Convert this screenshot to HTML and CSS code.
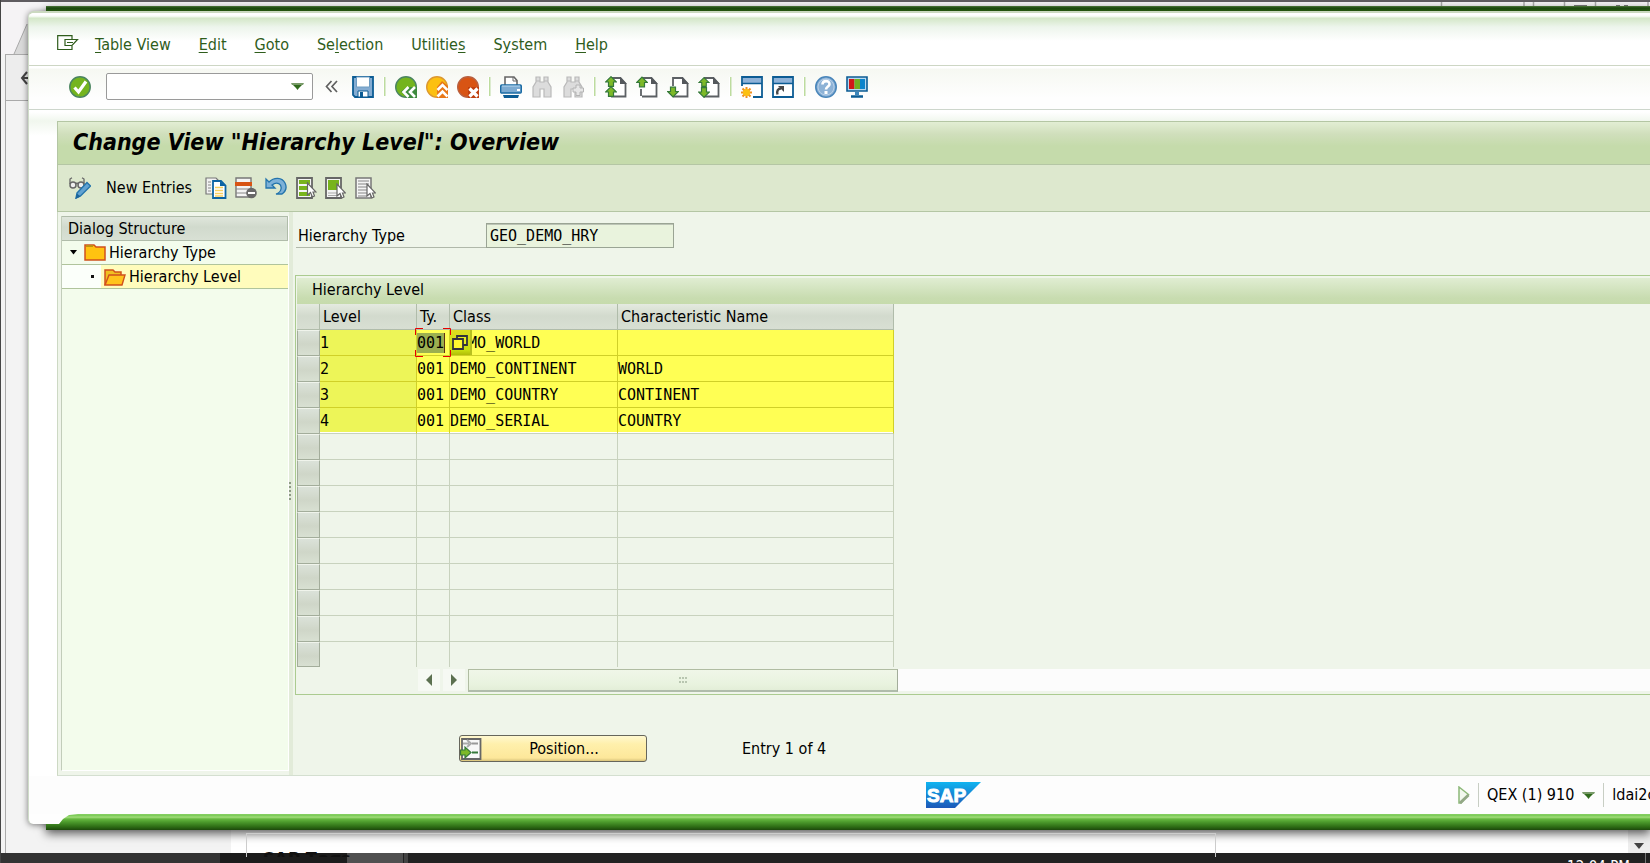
FILE: index.html
```html
<!DOCTYPE html>
<html lang="en">
<head>
<meta charset="utf-8">
<title>Change View "Hierarchy Level": Overview</title>
<link rel="stylesheet" href="styles.css">
</head>
<body>
<svg class="defs" aria-hidden="true">
  <defs>
    <symbol id="doc" viewBox="0 0 22 22"><path d="M6 2H15.500L20.500 7.500V20.500H6" fill="#fff" stroke="#5c6064" stroke-width="1.800"/><path d="M15 1L22 8H15Z" fill="#54585c"/></symbol>
    <symbol id="up" viewBox="0 0 12 11"><path d="M6 .7L11.300 6H8.500V10.300H3.500V6H.7Z" fill="#7db928" stroke="#35793a" stroke-width="1.200"/></symbol>
    <symbol id="down" viewBox="0 0 12 11"><path d="M6 10.300L11.300 5H8.500V.7H3.500V5H.7Z" fill="#7db928" stroke="#35793a" stroke-width="1.200"/></symbol>
    <symbol id="binoc" viewBox="0 0 22 22"><path d="M5 1H9V6H13V1H17V6L20 11V21H13V13H9V21H2V11L5 6Z" fill="#dcdcdc" stroke="#b9b9b9" stroke-width="1.200"/><path d="M5 5H9M13 5H17" stroke="#b9b9b9"/></symbol>
    <symbol id="pointer" viewBox="0 0 10 16"><path d="M1 1V13L4 10.500L6 15L8 14L6.500 10H9.500Z" fill="#fff" stroke="#666" stroke-width="1.200"/></symbol>
  </defs>
</svg>

<div class="backdrop">
  <div class="browser-tabs"><svg class="tab-edge" viewBox="0 0 20 30" aria-hidden="true"><path d="M1 30L14 0H20V30Z" fill="#d9d9d9"/><path d="M1 30L14 0" stroke="#a8a8a8" fill="none"/></svg>
    <svg class="caption-buttons" width="210" height="5" viewBox="0 0 210 5" aria-hidden="true"><path d="M1.500 0V5M84 0V5M93.500 0V5M124.500 0V5M155.500 0V5M208 0V5" stroke="#aaa" stroke-width="1.500"/><path d="M134 4H147M176 4H180M184 4H188" stroke="#777" stroke-width="2"/></svg>
  </div>
  <div class="browser-bar"><svg width="8" height="16" viewBox="0 0 8 16" aria-hidden="true"><path d="M7 2L2 8L7 14M2 8H8" fill="none" stroke="#444" stroke-width="2"/></svg></div>
  <div class="browser-page"><div class="page-sheet"><div class="page-box"><span class="page-title">SAP Tags</span></div></div><div class="page-scroll"><svg width="10" height="6" viewBox="0 0 10 6" aria-hidden="true"><path d="M0 0H10L5 6Z" fill="#444"/></svg></div></div>
  <div class="taskbar"><span class="task-gap"></span><span class="task-dark"></span><span class="task-active"></span><span class="task-line"></span><span class="clock">12:04 PM</span></div>
</div>

<div class="frame"></div>
<main class="window">
  <nav class="menu">
    <button class="menu-icon" aria-label="Menu"><svg width="22" height="16" viewBox="0 0 22 16"><path d="M15 4V.7H.7V14.500H15V11" fill="none" stroke="#2f5d1c" stroke-width="1.200"/><path d="M8 4.500H20.500L15 10.500H8Z" fill="#fff" stroke="#2f5d1c" stroke-width="1.200"/><path d="M10 7.500H16" stroke="#2f5d1c"/></svg></button>
    <button><u>T</u>able View</button><button><u>E</u>dit</button><button><u>G</u>oto</button><button>Se<u>l</u>ection</button><button>Utilitie<u>s</u></button><button>S<u>y</u>stem</button><button><u>H</u>elp</button>
  </nav>

  <div class="toolbar">
    <button aria-label="Enter"><svg class="ico" viewBox="0 0 22 22"><circle cx="11" cy="11" r="10.200" fill="#74b41e" stroke="#4b8560" stroke-width="1.500"/><path d="M5.500 11.500L9.500 16L17 5.500" fill="none" stroke="#fff" stroke-width="3.200"/></svg></button>
    <div class="command"><input type="text" aria-label="Command"><svg width="13" height="7" viewBox="0 0 13 7" aria-hidden="true"><path d="M1 1H12L8 5L6.500 7L5 5Z" fill="#2f6a1c"/><path d="M0 0H13L12 2H1Z" fill="#789a68"/></svg></div>
    <button class="collapse" aria-label="Collapse"><svg width="13" height="13" viewBox="0 0 13 13"><path d="M6.500 1L1.500 6.500L6.500 12M12 1L7 6.500L12 12" fill="none" stroke="#606060" stroke-width="1.700"/></svg></button>
    <button aria-label="Save"><svg class="ico" viewBox="0 0 22 22"><path d="M1 1H21V21H3L1 19Z" fill="#84acd2" stroke="#0c5c94" stroke-width="1.800"/><path d="M4.500 1H17.500V11H4.500Z" fill="#fff" stroke="#6d9cc2"/><path d="M6 15H16V21H6Z" fill="#fff" stroke="#0c5c94"/><path d="M8 16H11V21H8Z" fill="#0c5c94"/></svg></button>
    <span class="sep"></span>
    <button aria-label="Back"><svg class="ico" viewBox="0 0 22 22"><circle cx="11" cy="11" r="10.300" fill="#74b41e" stroke="#4b8560" stroke-width="1.400"/><path d="M22 11H12L6 15.500L12 22H22Z" fill="#3e8a3e"/><path d="M13.500 11L8.500 16L13.500 21M20 11L15 16L20 21" fill="none" stroke="#fff" stroke-width="2.600"/></svg></button>
    <button aria-label="Exit"><svg class="ico" viewBox="0 0 22 22"><circle cx="11" cy="11" r="10.300" fill="#fcc010" stroke="#dc9830" stroke-width="1.400"/><path d="M11 22V11L16 5L22 10V22Z" fill="#e87818"/><path d="M11.500 14L16.500 9L21.500 14M11.500 20.500L16.500 15.500L21.500 20.500" fill="none" stroke="#fff" stroke-width="2.600"/></svg></button>
    <button aria-label="Cancel"><svg class="ico" viewBox="0 0 22 22"><circle cx="11" cy="11" r="10.300" fill="#d85414" stroke="#b86040" stroke-width="1.400"/><path d="M11 11H22V22H11Z" fill="#c04010"/><path d="M12.500 12.500L20.500 20.500M20.500 12.500L12.500 20.500" fill="none" stroke="#fff" stroke-width="3.200"/></svg></button>
    <span class="sep"></span>
    <button aria-label="Print"><svg class="ico" viewBox="0 0 22 22"><path d="M5 10V1H14L17 4.500V10" fill="#fff" stroke="#666" stroke-width="1.600"/><path d="M13 1V5H17" fill="none" stroke="#666"/><rect x=".7" y="9" width="20.600" height="8" rx="1" fill="#7dabd2" stroke="#1a6ba4" stroke-width="1.400"/><path d="M2 10H20" stroke="#badaf0"/><path d="M17 14H20" stroke="#fff" stroke-width="2"/><path d="M3 19H19L18 22H4Z" fill="#0c5c94"/></svg></button>
    <button aria-label="Find"><svg class="ico"><use href="#binoc"/></svg></button>
    <button aria-label="Find next"><svg class="ico" viewBox="0 0 22 22"><use href="#binoc" width="22" height="22"/><path d="M14 9H18V12H21.500V16H18V19.500H14V16H11V12H14Z" fill="#e6e6e6" stroke="#b4b4b4"/></svg></button>
    <span class="sep"></span>
    <button aria-label="First page"><svg class="ico" viewBox="0 0 22 22"><use href="#doc" width="22" height="22"/><path d="M5 3H10V19H5Z" fill="#fff"/><use href="#up" width="12" height="11"/><use href="#up" y="10" width="12" height="11"/></svg></button>
    <button aria-label="Previous page"><svg class="ico" viewBox="0 0 22 22"><use href="#doc" width="22" height="22"/><path d="M5 13V20" stroke="#5c6064" stroke-width="1.800"/><use href="#up" width="12" height="12"/></svg></button>
    <button aria-label="Next page"><svg class="ico" viewBox="0 0 22 22"><use href="#doc" width="22" height="22"/><path d="M6 1V10" stroke="#5c6064" stroke-width="1.800"/><use href="#down" y="10" width="12" height="12"/></svg></button>
    <button aria-label="Last page"><svg class="ico" viewBox="0 0 22 22"><use href="#doc" width="22" height="22"/><path d="M5 3H10V19H5Z" fill="#fff"/><use href="#up" y="1" width="12" height="10"/><use href="#down" y="11" width="12" height="11"/></svg></button>
    <span class="sep"></span>
    <button aria-label="New session"><svg class="ico" viewBox="0 0 22 22"><path d="M1 10V1H21V21H12" fill="#fff" stroke="#0c5c94" stroke-width="1.800"/><path d="M2 2H20V7H2Z" fill="#8eb2d8"/><path d="M1 7.500H21" stroke="#0c5c94" stroke-width="1.600"/><path d="M5.500 11V22M0 16.500H11M1.500 12.500L9.500 20.500M9.500 12.500L1.500 20.500" stroke="#f09020" stroke-width="2"/><circle cx="5.500" cy="16.500" r="3.500" fill="#fcc010"/></svg></button>
    <button aria-label="Create shortcut"><svg class="ico" viewBox="0 0 22 22"><path d="M1 1H21V21H1Z" fill="#fff" stroke="#0c5c94" stroke-width="1.800"/><path d="M2 2H20V7H2Z" fill="#8eb2d8"/><path d="M1 7.500H21" stroke="#0c5c94" stroke-width="1.600"/><path d="M5.500 18.500C4.500 15 6 12.500 9 12.500" fill="none" stroke="#484848" stroke-width="2.400"/><path d="M6 10H12V16Z" fill="#484848"/></svg></button>
    <span class="sep"></span>
    <button aria-label="Help"><svg class="ico" viewBox="0 0 22 22"><circle cx="11" cy="11" r="10.200" fill="#8db2d6" stroke="#4a86ba" stroke-width="1.600"/><circle cx="11" cy="11" r="8" fill="none" stroke="#b8d0e8"/><path d="M7.500 8.500C7.500 4 14.500 4 14.500 8.200C14.500 10.500 11 10.500 11 13.500" fill="none" stroke="#fff" stroke-width="2.600"/><path d="M9.500 15H12.500V18H9.500Z" fill="#fff"/></svg></button>
    <button aria-label="Customize layout"><svg class="ico" viewBox="0 0 22 22"><path d="M1 1H21V15H1Z" fill="#b8d8f0" stroke="#0c5c94" stroke-width="1.600"/><path d="M3 3H8.500V13H3Z" fill="#d01818"/><path d="M8.500 3H14V13H8.500Z" fill="#70b020"/><path d="M14 3H19V13H14Z" fill="#0c84cc"/><path d="M11 16V19" stroke="#3c86bc" stroke-width="4"/><path d="M5 20.500H17" stroke="#0c5c94" stroke-width="2.400"/></svg></button>
  </div>

  <section class="screen">
    <h1 class="title">Change View "Hierarchy Level": Overview</h1>
    <div class="app-toolbar">
      <button class="first" aria-label="Display/Change"><svg class="ico" viewBox="0 0 22 22"><circle cx="4" cy="8" r="3" fill="#eee" stroke="#666" stroke-width="1.500"/><circle cx="12" cy="8" r="3" fill="#eee" stroke="#666" stroke-width="1.500"/><path d="M1 7V2L3 .8M15 7V2L13 .8M6.500 7L8 6L9.500 7" fill="none" stroke="#666" stroke-width="1.300"/><path d="M8 16L18 5.500L21.500 9L11.500 19L7 21Z" fill="#62a2d2" stroke="#2474ac" stroke-width="1.400"/><path d="M6.500 22L8 16.500L11.500 19.500Z" fill="#1c659a"/></svg></button>
      <button class="text-button">New Entries</button>
      <button aria-label="Copy as"><svg class="ico" viewBox="0 0 22 22"><path d="M1 1H11L13 3V17H1Z" fill="#f2f2f2" stroke="#777" stroke-width="1.200"/><path d="M3 5H6M3 8H6M3 11H6M3 14H6" stroke="#888"/><path d="M8 4H16L20.500 8.500V21H8Z" fill="#fff" stroke="#0c64a4" stroke-width="1.800"/><path d="M15 4V9H21Z" fill="#0c64a4"/><path d="M10 10.500H18M10 13.500H18M10 16.500H18M10 19H18" stroke="#f8d060" stroke-width="1.700"/></svg></button>
      <button aria-label="Delete"><svg class="ico" viewBox="0 0 22 22"><path d="M1 1H16V20H1Z" fill="#f4f4f4" stroke="#777" stroke-width="1.400"/><path d="M0 5H17V9H0Z" fill="#d85414"/><path d="M1 12H16M1 16H12" stroke="#888"/><circle cx="16.500" cy="16" r="5.300" fill="#686868"/><path d="M13 16H20" stroke="#fff" stroke-width="2"/></svg></button>
      <button aria-label="Undo"><svg class="ico" viewBox="0 0 22 22"><path d="M1 2V11H10L7 8C12 4 17 7 16 12C15.500 15 14 16 11 17H17C21 14 22 10 20 6C17 0 9 0 4 5Z" fill="#7db1d8" stroke="#2474ac" stroke-width="1.300"/></svg></button>
      <button aria-label="Select all"><svg class="ico" viewBox="0 0 22 22"><path d="M2 1H17V21H2Z" fill="#f4f4f4" stroke="#666" stroke-width="1.800"/><path d="M4 3H15V7H4ZM4 9H15V13H4ZM4 15H15V19H4Z" fill="#78b41c"/><use href="#pointer" x="11" y="5" width="11" height="16"/></svg></button>
      <button aria-label="Select block"><svg class="ico" viewBox="0 0 22 22"><path d="M1 1H16V21H1Z" fill="#f4f4f4" stroke="#666" stroke-width="1.800"/><path d="M3 3H14V13H3Z" fill="#78b41c"/><path d="M3 16H12M3 18.500H12" stroke="#aaa" stroke-width="1.200"/><use href="#pointer" x="11" y="6" width="10" height="16"/></svg></button>
      <button aria-label="Deselect all"><svg class="ico" viewBox="0 0 22 22"><path d="M1 1H16V21H1Z" fill="#f4f4f4" stroke="#777" stroke-width="1.500"/><path d="M3 4H14M3 7H14M3 10H14M3 13H12M3 16H12M3 19H12" stroke="#aaa" stroke-width="1.400"/><use href="#pointer" x="11" y="6" width="10" height="16"/></svg></button>
    </div>
    <div class="work">
      <aside class="tree">
        <h2 class="tree-head">Dialog Structure</h2>
        <ul>
          <li><span class="branch"><svg width="7" height="5" viewBox="0 0 7 5" aria-hidden="true"><path d="M0 0H7L3.500 4.500Z" fill="#000"/></svg></span><svg class="folder" viewBox="0 0 22 18" aria-hidden="true"><path d="M1 3V1H10L12 3H21V16H1Z" fill="#ffc310" stroke="#d0501c" stroke-width="1.500"/><path d="M2 2H9" stroke="#c09010" stroke-width="2"/></svg><a href="#type">Hierarchy Type</a></li>
          <li class="selected"><span class="branch deep"><i class="dot"></i></span><svg class="folder" viewBox="0 0 22 18" aria-hidden="true"><path d="M1 17V2H9L11 4H17V8" fill="#f0c020" stroke="#d0501c" stroke-width="1.500"/><path d="M1 17L5 7H21L18 17Z" fill="#ffc31c" stroke="#d0501c" stroke-width="1.400"/></svg><a href="#level">Hierarchy Level</a></li>
        </ul>
      </aside>
      <div class="splitter"><i></i><i></i><i></i><i></i><i></i></div>
      <div class="detail">
        <div class="field"><label for="htype">Hierarchy Type</label><input id="htype" type="text" value="GEO_DEMO_HRY" readonly></div>
        <section class="group">
          <h2>Hierarchy Level</h2>
          <table>
            <thead><tr><th class="c-sel" aria-label="Select"></th><th class="c-level">Level</th><th class="c-type">Ty.</th><th class="c-class">Class</th><th class="c-name">Characteristic Name</th></tr></thead>
            <tbody>
              <tr class="hot"><td></td><td>1</td><td class="focus"><input type="text" value="001" aria-label="Type"><svg class="corners" width="36" height="29" viewBox="0 0 36 29" aria-hidden="true"><path d="M.5 7V.5H8M28 .5H35.500V7M.5 22V28.500H8M28 28.500H35.500V22" fill="none" stroke="#e80000"/></svg><button class="f4" aria-label="Input help"><svg width="16" height="16" viewBox="0 0 16 16"><path d="M5 1H15V10H5Z" fill="#e8ee20" stroke="#33333c" stroke-width="1.800"/><path d="M1 4H11V14H1Z" fill="#fff830" stroke="#33333c" stroke-width="1.800"/></svg></button></td><td>DEMO_WORLD</td><td></td></tr>
              <tr class="hot"><td></td><td>2</td><td>001</td><td>DEMO_CONTINENT</td><td>WORLD</td></tr>
              <tr class="hot"><td></td><td>3</td><td>001</td><td>DEMO_COUNTRY</td><td>CONTINENT</td></tr>
              <tr class="hot last"><td></td><td>4</td><td>001</td><td>DEMO_SERIAL</td><td>COUNTRY</td></tr>
              <tr><td></td><td></td><td></td><td></td><td></td></tr>
              <tr><td></td><td></td><td></td><td></td><td></td></tr>
              <tr><td></td><td></td><td></td><td></td><td></td></tr>
              <tr><td></td><td></td><td></td><td></td><td></td></tr>
              <tr><td></td><td></td><td></td><td></td><td></td></tr>
              <tr><td></td><td></td><td></td><td></td><td></td></tr>
              <tr><td></td><td></td><td></td><td></td><td></td></tr>
              <tr><td></td><td></td><td></td><td></td><td></td></tr>
              <tr><td></td><td></td><td></td><td></td><td></td></tr>
            </tbody>
          </table>
          <div class="scroll">
            <button aria-label="Scroll left"><svg width="8" height="12" viewBox="0 0 8 12"><path d="M7 0V12L1 6Z" fill="#5c7050"/></svg></button>
            <button aria-label="Scroll right"><svg width="8" height="12" viewBox="0 0 8 12"><path d="M1 0V12L7 6Z" fill="#5c7050"/></svg></button>
            <div class="track"><div class="thumb"><i></i><i></i><i></i><i></i><i></i><i></i></div></div>
          </div>
        </section>
        <div class="actions">
          <button class="position"><svg class="ico" viewBox="0 0 22 22" aria-hidden="true"><path d="M2 1H20.500V21H2Z" fill="#f8f8f8" stroke="#666" stroke-width="1.800"/><path d="M3 5.500H9M7 2L11 5.500L7 9" fill="none" stroke="#aaa" stroke-width="2"/><path d="M12 5.500H18" stroke="#999" stroke-width="2"/><path d="M12 14.500H18" stroke="#35793a" stroke-width="2"/><path d="M.5 12H5V9L11 14.500L5 20V17H.5Z" fill="#7db928" stroke="#35793a" stroke-width="1.200"/></svg><span>Position...</span></button>
          <p>Entry 1 of 4</p>
        </div>
      </div>
    </div>
  </section>

  <footer class="status">
    <svg class="sap" viewBox="0 0 55 26" role="img" aria-label="SAP"><defs><linearGradient id="sg" x2="0" y2="1"><stop stop-color="#10b4f0"/><stop offset="1" stop-color="#1c58b8"/></linearGradient></defs><path d="M0 0H55L29 26H0Z" fill="url(#sg)"/><text class="sap-text" x="1" y="20">SAP</text></svg>
    <div class="system">
      <svg width="12" height="18" viewBox="0 0 12 18" aria-hidden="true"><path d="M1 1L10.500 8.500L3 17H1Z" fill="#f2f8ee" stroke="#8cb878" stroke-width="1.500"/><path d="M10.500 9L2 17" stroke="#93a886" stroke-width="3"/></svg>
      <i class="rule"></i>
      <button>QEX (1) 910 <svg width="13" height="7" viewBox="0 0 13 7" aria-hidden="true"><path d="M1 1H12L8 5L6.500 7L5 5Z" fill="#2f6a1c"/><path d="M0 0H13L12 2H1Z" fill="#789a68"/></svg></button>
      <i class="rule"></i>
      <span class="host">ldai2c</span>
    </div>
  </footer>
</main>
<div class="edge"></div>
</body>
</html>
```

FILE: styles.css
```css
* { box-sizing: border-box; }
html, body { height: 100%; }
body {
  margin: 0;
  overflow: hidden;
  position: relative;
  color: #000;
  font: 16px/20px "DejaVu Sans Condensed", "Noto Sans", sans-serif;
}
h1, h2, p, ul { margin: 0; padding: 0; font-weight: normal; }
ul { list-style: none; }
svg { display: block; flex: none; }
button { font: inherit; color: inherit; background: none; border: 0; padding: 0; }
input { font: inherit; color: inherit; min-width: 0; }
a { color: inherit; text-decoration: none; }
.defs { position: absolute; width: 0; height: 0; }
.ico { width: 22px; height: 22px; }

/* Browser behind the window */
.backdrop {
  position: absolute; inset: 0;
  display: flex; flex-direction: column;
  background: #f3f3f3;
  border-left: 1px solid #454545;
}
.browser-tabs {
  flex: none; display: flex; align-items: flex-end; justify-content: space-between;
  height: 54px; padding-left: 12px;
  border-top: 2px solid #5f5c60;
  background: #f5f3f5;
}
.tab-edge { width: 20px; height: 30px; }
.caption-buttons { align-self: flex-start; }
.browser-bar {
  flex: none; display: flex; align-items: center;
  height: 47px; margin-left: 4px; padding-left: 14px;
  border: 1px solid #aaa; background: #ededed;
}
.browser-page { flex: 1; display: flex; padding-left: 225px; margin-left: 4px; border-left: 1px solid #aaa; }
.page-sheet { flex: 1; display: flex; align-items: flex-end; padding-left: 15px; background: #fff; }
.page-box {
  position: relative; z-index: 1;
  width: 970px; height: 24px; margin-bottom: -4px; padding: 13px 0 0 16px;
  border: 1px solid #ccc; border-bottom: 0; overflow: hidden;
}
.page-title { display: block; font: bold 20px/24px "Open Sans", sans-serif; color: #111; }
.page-scroll { width: 22px; display: flex; align-items: flex-end; justify-content: center; padding-bottom: 4px; background: #eee; }
.taskbar { flex: none; display: flex; height: 10px; overflow: hidden; background: #222; }
.task-gap { width: 219px; background: #333; }
.task-dark { width: 127px; background: #1c1c1c; }
.task-active { width: 56px; background: #505050; }
.task-line { width: 5px; background: #444; border-left: 1px solid #222; }
.clock { margin-left: auto; padding: 4px 15px 0 0; border-right: 1px solid #777; color: #fff; font: 15px/20px "DejaVu Sans Condensed", sans-serif; height: 30px; margin-right: 4px; }

/* Window frame */
.frame {
  position: absolute; inset: 6px 0 33px 46px;
  background: linear-gradient(#4f7a3a, #1d4a10 2px, #2e6a14 5px, #2e6a14);
  box-shadow: 0 4px 9px rgba(0, 0, 0, .6);
}
.edge {
  position: absolute; right: 0; bottom: 33px; left: 46px; height: 16px;
  background: linear-gradient(#86cf62, #7ccb58 2px, #a8e080 3px, #66b840 5px, #4c9a2c 8px, #2c6a14 13px, #1d480c);
  clip-path: polygon(0 10px, 13px 10px, 17px 5px, 23px 1px, 32px 0, 100% 0, 100% 100%, 0 100%);
}
.window {
  position: absolute; inset: 11px 0 39px 28px;
  display: flex; flex-direction: column;
  padding-bottom: 10px;
  border-top: 2px solid #cbd9c0; border-left: 1px solid #cfdcc8;
  border-radius: 6px 0 0 5px;
  background: #fefefe;
  box-shadow: 0 1px 6px rgba(0, 0, 0, .5);
  overflow: hidden;
}

/* Menu and system toolbar */
.menu {
  flex: none; display: flex; align-items: center; gap: 28px;
  height: 53px; padding: 12px 0 0 28px;
  border-bottom: 1px solid #cdd6c4;
  background: linear-gradient(#fff 2px, #eef6ea 4px, #d3e7c7 5px, #edf5ec 14px, #fff 28px);
  color: #2f5d1c;
}
.menu u { text-underline-offset: 2px; }
.menu-icon { margin-right: -12px; padding-bottom: 5px; }
.toolbar {
  flex: none; display: flex; align-items: center; gap: 9px;
  height: 44px; padding: 0 0 2px 40px;
  border-bottom: 1px solid #cdd6cc;
  background: linear-gradient(#fff 2px, #f6f8f2 3px, #fefefe 32px);
}
.command {
  display: flex; align-items: center;
  width: 207px; height: 27px; margin-left: 6px; padding-right: 8px;
  border: 1px solid #9a9a9a; border-radius: 2px; background: #fff;
}
.command input { flex: 1; border: 0; background: none; outline: 0; }
.collapse { width: 21px; padding-left: 3px; }
.sep { width: 3px; height: 19px; background: linear-gradient(90deg, #fff 1px, #bddc9e 1px, #bddc9e 2px, #dcebcf 2px); }

/* Screen */
.screen {
  flex: 1; min-height: 0; display: flex; flex-direction: column;
  padding-left: 28px;
  background: linear-gradient(#fff 2px, #f1f7ee 11px, #fff 26px);
  padding-top: 11px;
}
.title {
  flex: none; height: 44px; padding-left: 15px;
  border: 1px solid #b4c6a4; border-right: 0;
  background: linear-gradient(#e2eed4, #d0dfbc 12px, #c5dbab 24px, #c5dbab);
  font: italic bold 23px/40px "DejaVu Sans Condensed", "Noto Sans", sans-serif;
}
.app-toolbar {
  flex: none; display: flex; align-items: center; gap: 8px;
  height: 47px; padding-left: 11px;
  border-left: 1px solid #b4c6a4; border-bottom: 1px solid #b4c6a4;
  background: #dde8ce;
}
.app-toolbar .ico { margin-bottom: 1px; }
.text-button { margin: 0 5px 0 7px; }
.work {
  flex: 1; min-height: 0; display: flex;
  border-left: 1px solid #cdd9c4; border-bottom: 1px solid #d4dfd0;
  background: #eff5ea;
}
.tree {
  flex: none; width: 228px; margin: 4px 0 4px 3px;
  border-left: 1px solid #c2cdba; border-bottom: 1px solid #fff; border-right: 1px solid #fff;
  background: #f3fcec;
}
.tree-head {
  height: 25px; padding-left: 6px;
  border: 1px solid #b0bcaa; border-left: 0;
  background: linear-gradient(#dfe6dc, #d1dacd 10px, #d8e0d4);
  font-size: 16px; line-height: 24px;
}
.tree li { display: flex; align-items: center; gap: 3px; height: 24px; border-bottom: 1px solid #b0c49c; }
.tree .selected { background: #fffcbc; }
.branch { display: flex; align-items: center; justify-content: center; width: 19px; height: 100%; padding-left: 3px; }
.deep { width: 39px; padding-left: 22px; background: #fbfffa; }
.dot { width: 3px; height: 3px; background: #111; }
.folder { width: 22px; height: 18px; }
.splitter {
  flex: none; width: 4px; background: #e2ebd9;
  display: flex; flex-direction: column; align-items: flex-start; justify-content: center; gap: 2px;
  padding-bottom: 6px;
}
.splitter i { width: 2px; height: 2px; background: #8d9a84; }
.detail { flex: 1; min-width: 0; padding: 11px 0 0 2px; }
.field { display: flex; align-items: stretch; height: 25px; padding-left: 1px; }
.field label { width: 190px; padding: 3px 0 0 2px; border-bottom: 1px solid #b0b8aa; }
.field input {
  width: 188px; padding: 0 3px; outline: 0;
  border: 1px solid #9aa494; box-shadow: inset 0 1px #bcc4b6;
  background: #e9f3dd;
  font: 15px "DejaVu Sans Mono", monospace;
}
.group { margin-top: 27px; padding: 2px 0 2px 1px; border: 1px solid #abcb90; border-right: 0; }
.group h2 {
  height: 26px; padding-left: 15px;
  background: linear-gradient(#e0edd2, #c8dcb0 20px, #c6dbac);
  font-size: 16px; line-height: 24px;
}
table { width: 597px; table-layout: fixed; border-collapse: separate; border-spacing: 0; }
.c-sel { width: 23px; } .c-level { width: 97px; } .c-type { width: 33px; } .c-class { width: 168px; }
th {
  height: 26px; padding: 0 3px; text-align: left; font-weight: normal; white-space: nowrap;
  border-right: 1px solid #b0bcaa; border-bottom: 1px solid #b0bcaa;
  background: linear-gradient(#e4eae0, #d2dacd 12px, #d8dfd3);
}
td {
  height: 26px; padding: 0; white-space: nowrap;
  border-right: 1px solid #c8d2be; border-bottom: 1px solid #c8d2be;
  font: 15px/20px "DejaVu Sans Mono", monospace;
}
td:first-child {
  border: 1px solid #a3ad9b; border-top-color: #f0f4ec;
  background: linear-gradient(#dbe2d9, #cfd6c8 13px, #d8e0d2);
}
.hot td:not(:first-child) { background: #ffff54; border-color: #d0d028; }
.hot td:nth-child(2) { background: #edf558; }
.last td:not(:first-child) { border-bottom-color: #c8d2be; box-shadow: inset 0 -1px #fff; }
tbody tr:last-child td { height: 25px; }
tbody tr:last-child td:not(:first-child) { border-bottom: 0; }
.focus { position: relative; }
.focus input {
  display: block; width: 28px; height: 20px; padding: 0; border: 0; outline: 0;
  border-right: 1px solid #603010; background: #9caf50;
}
.corners { position: absolute; top: -2px; left: -2px; z-index: 1; }
.f4 {
  position: absolute; top: 0; left: 33px; width: 22px; height: 25px; padding: 4px 0 0 2px;
  background: linear-gradient(#dddd20, #c8e010 20px, #b0bc08); border-right: 2px solid #b8c020;
}
.f4 svg { margin-bottom: 4px; }
.scroll { display: flex; height: 25px; padding: 2px 0 1px 121px; gap: 3px; }
.scroll button { width: 22px; height: 22px; display: flex; align-items: center; justify-content: center; background: #f6f9f3; }
.track { flex: 1; background: #fcfcfc; }
.thumb {
  width: 430px; height: 23px;
  display: grid; grid-template-columns: repeat(3, 2px); gap: 2px 1px; place-content: center;
  border: 1px solid #b0bca2; border-bottom: 2px solid #b0bcab; border-right-color: #a3ad9b;
  background: linear-gradient(#f0f6e8, #e9f3df 14px, #e3eed8);
}
.thumb i { width: 2px; height: 2px; background: #b8c6b0; }
.actions { display: flex; align-items: center; gap: 95px; padding: 40px 0 0 164px; }
.position {
  display: flex; align-items: center; width: 188px; height: 27px;
  border: 1px solid #66665c; border-radius: 3px;
  background: linear-gradient(#fff8d0, #fff0ac 8px, #fde79a 22px, #d9c47c);
}
.position span { flex: 1; text-align: center; }

/* Status bar */
.status { flex: none; display: flex; align-items: center; justify-content: space-between; height: 38px; padding-left: 897px; background: #fdfdfd; }
.sap { width: 55px; height: 26px; }
.sap-text { font: bold 19px "Liberation Sans", Arial, sans-serif; fill: #fff; stroke: #fff; }
.system { display: flex; align-items: center; width: 192px; gap: 8px; overflow: hidden; white-space: nowrap; }
.system button { display: flex; align-items: center; gap: 8px; }
.rule { flex: none; width: 1px; height: 24px; background: #c8cec4; }
```
